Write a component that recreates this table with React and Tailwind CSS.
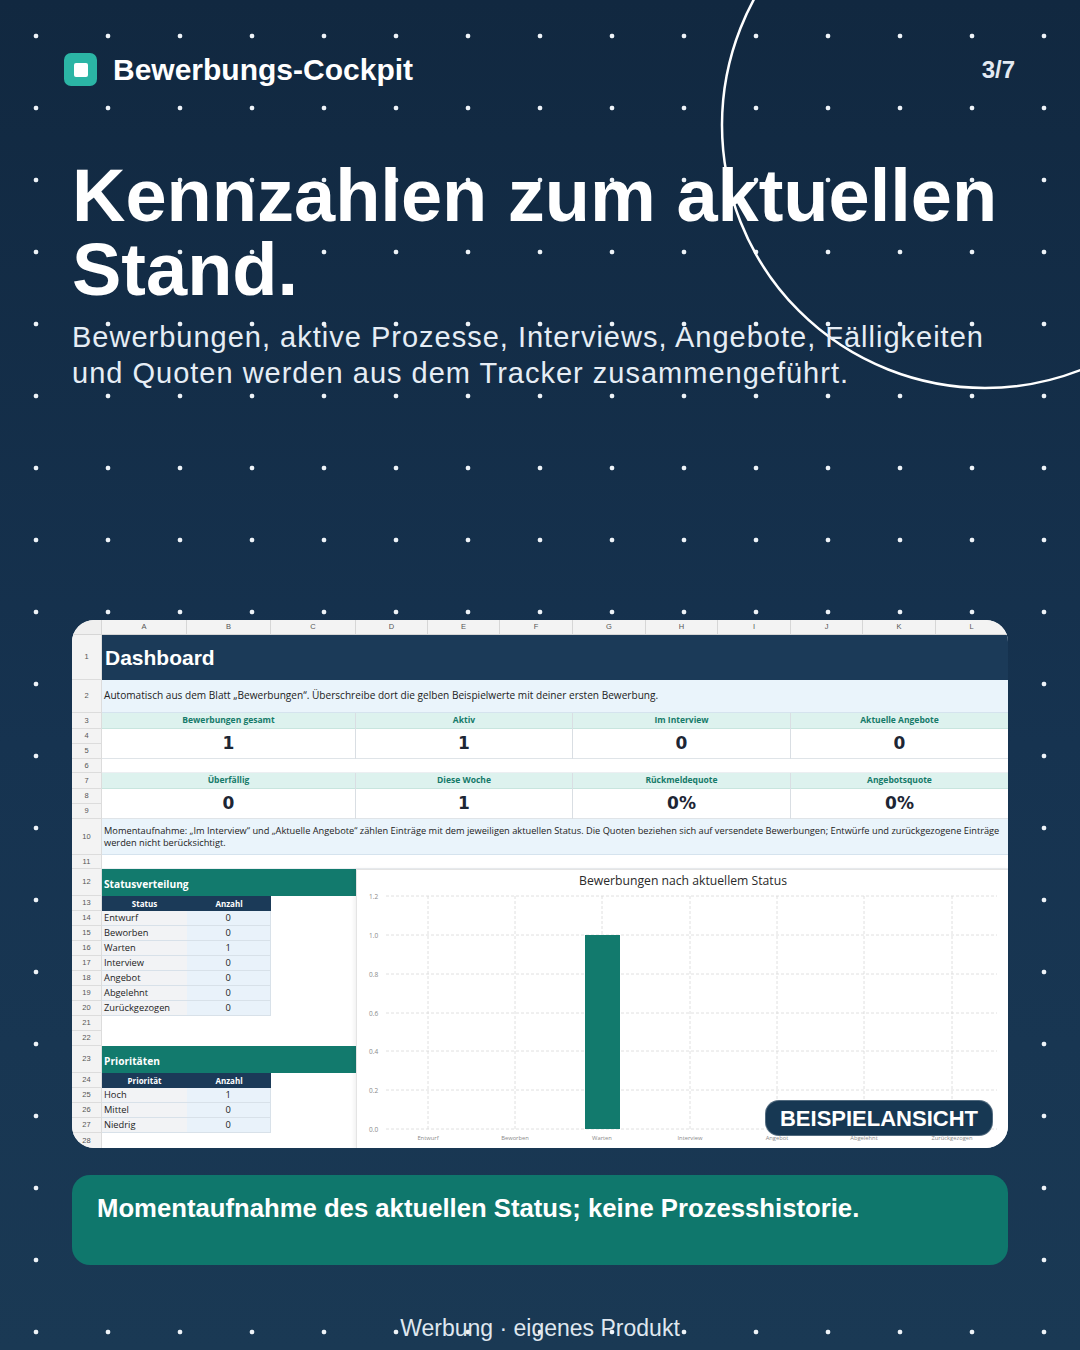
import React from "react";

const COLS = [
  { l: "A", w: "w-[85px]" },
  { l: "B", w: "w-[84px]" },
  { l: "C", w: "w-[85px]" },
  { l: "D", w: "w-[72px]" },
  { l: "E", w: "w-[72px]" },
  { l: "F", w: "w-[73px]" },
  { l: "G", w: "w-[73px]" },
  { l: "H", w: "w-[72px]" },
  { l: "I", w: "w-[73px]" },
  { l: "J", w: "w-[72px]" },
  { l: "K", w: "w-[73px]" },
  { l: "L", w: "w-[72px]" },
];

function RowNum({ n, cls }) {
  return (
    <div
      className={`${cls} w-[30px] shrink-0 flex items-center justify-center bg-[#f3f3f3] border-b border-r border-[#dcdcdc] text-[7.5px] text-[#555] font-['Liberation_Sans',Arial,sans-serif]`}
    >
      {n}
    </div>
  );
}

function KpiGroup({ rows, items }) {
  return (
    <div className="flex">
      <div className="flex flex-col w-[30px] shrink-0">
        <RowNum n={rows[0]} cls="h-[16px]" />
        <RowNum n={rows[1]} cls="h-[15px]" />
        <RowNum n={rows[2]} cls="h-[15px]" />
      </div>
      <div className="flex flex-1">
        {items.map((it) => (
          <div key={it.label} className={`${it.w} flex flex-col border-r border-[#d9dee3] last:border-r-0`}>
            <div className="h-[16px] bg-[#ddf2ee] border-b border-[#c8e5de] flex items-center justify-center text-[8.5px] font-bold text-[#157a69] font-['Open_Sans',sans-serif]">
              {it.label}
            </div>
            <div className="h-[30px] bg-white border-b border-[#dfe4e8] flex items-center justify-center text-[17px] font-bold text-[#1d2634] font-['DejaVu_Sans',sans-serif]">
              {it.value}
            </div>
          </div>
        ))}
      </div>
    </div>
  );
}

function EmptyRow({ n, cls }) {
  return (
    <div className="flex">
      <RowNum n={n} cls={cls} />
      <div className={`${cls} flex-1 bg-white border-b border-[#eceff2]`} />
    </div>
  );
}

function SectionHead({ n, title }) {
  return (
    <div className="flex">
      <RowNum n={n} cls="h-[27px]" />
      <div className="h-[27px] w-[254px] bg-[#127a6d] flex items-end pb-[4px] pl-[2px] text-white font-bold text-[10.2px] font-['Open_Sans',sans-serif]">
        {title}
      </div>
    </div>
  );
}

function TableHead({ n, a, b }) {
  return (
    <div className="flex">
      <RowNum n={n} cls="h-[15px]" />
      <div className="h-[15px] w-[169px] flex bg-[#1b3a58] text-white font-bold text-[8px] font-['Open_Sans',sans-serif]">
        <div className="w-[85px] flex items-center justify-center">{a}</div>
        <div className="w-[84px] flex items-center justify-center">{b}</div>
      </div>
      <div className="h-[15px] w-[85px] bg-white" />
    </div>
  );
}

function TableRow({ n, label, value }) {
  return (
    <div className="flex">
      <RowNum n={n} cls="h-[15px]" />
      <div className="h-[15px] w-[169px] flex border-b border-r border-[#d8e1e9] text-[9.3px] text-[#222] font-['Open_Sans',sans-serif]">
        <div className="w-[85px] bg-[#f2f3f5] flex items-center pl-[2px]">{label}</div>
        <div className="w-[84px] bg-[#e9f2fa] flex items-center justify-center">{value}</div>
      </div>
      <div className="h-[15px] w-[85px] bg-white" />
    </div>
  );
}

function Chart() {
  const ticks = [
    { v: "1.2", y: 26 },
    { v: "1.0", y: 65 },
    { v: "0.8", y: 104 },
    { v: "0.6", y: 143 },
    { v: "0.4", y: 181 },
    { v: "0.2", y: 220 },
    { v: "0.0", y: 259 },
  ];
  const cats = [
    { l: "Entwurf", x: 71 },
    { l: "Beworben", x: 158 },
    { l: "Warten", x: 245 },
    { l: "Interview", x: 333 },
    { l: "Angebot", x: 420 },
    { l: "Abgelehnt", x: 507 },
    { l: "Zurückgezogen", x: 595 },
  ];
  return (
    <svg width="652" height="278" viewBox="0 0 652 278" className="block">
      <text x="326" y="15" textAnchor="middle" fontSize="12.2" fill="#2a2a2a" fontFamily="Open Sans, sans-serif">
        Bewerbungen nach aktuellem Status
      </text>
      {ticks.map((t) => (
        <g key={t.v}>
          <line x1="29" x2="640" y1={t.y} y2={t.y} stroke="#d8d8d8" strokeWidth="0.8" strokeDasharray="3 2" />
          <text x="12" y={t.y + 2.5} fontSize="6.5" fill="#8a8a8a" fontFamily="Open Sans, sans-serif">
            {t.v}
          </text>
        </g>
      ))}
      {cats.map((c) => (
        <g key={c.l}>
          <line x1={c.x} x2={c.x} y1="26" y2="259" stroke="#d8d8d8" strokeWidth="0.8" strokeDasharray="3 2" />
          <text x={c.x} y="270" textAnchor="middle" fontSize="5.8" fill="#8a8a8a" fontFamily="Open Sans, sans-serif">
            {c.l}
          </text>
        </g>
      ))}
      <rect x="228" y="65" width="35" height="194" fill="#127a6d" />
    </svg>
  );
}

function Sheet() {
  return (
    <div className="relative mt-[229px] h-[528px] rounded-[22px] overflow-hidden bg-white">
      {/* column headers */}
      <div className="flex h-[15px]">
        <div className="w-[30px] h-[15px] bg-[#efefef] border-r border-b border-[#d6d6d6]" />
        {COLS.map((c) => (
          <div
            key={c.l}
            className={`${c.w} h-[15px] bg-[#f3f3f3] border-r border-b border-[#d6d6d6] flex items-center justify-center text-[7.5px] text-[#555] font-['Liberation_Sans',Arial,sans-serif]`}
          >
            {c.l}
          </div>
        ))}
      </div>

      {/* row 1 */}
      <div className="flex">
        <RowNum n="1" cls="h-[45px]" />
        <div className="h-[45px] flex-1 bg-[#1b3a58] flex items-center pl-[3px] text-white font-bold text-[21px] font-['Liberation_Sans',Arial,sans-serif]">
          Dashboard
        </div>
      </div>

      {/* row 2 */}
      <div className="flex">
        <RowNum n="2" cls="h-[33px]" />
        <div className="h-[33px] flex-1 bg-[#eaf4fb] border-b border-[#d5e3ee] flex items-center pl-[2px] text-[10.1px] text-[#222] whitespace-nowrap font-['Open_Sans',sans-serif]">
          Automatisch aus dem Blatt „Bewerbungen“. Überschreibe dort die gelben Beispielwerte mit deiner ersten Bewerbung.
        </div>
      </div>

      <KpiGroup
        rows={["3", "4", "5"]}
        items={[
          { label: "Bewerbungen gesamt", value: "1", w: "w-[254px]" },
          { label: "Aktiv", value: "1", w: "w-[217px]" },
          { label: "Im Interview", value: "0", w: "w-[218px]" },
          { label: "Aktuelle Angebote", value: "0", w: "w-[217px]" },
        ]}
      />
      <EmptyRow n="6" cls="h-[14px]" />
      <KpiGroup
        rows={["7", "8", "9"]}
        items={[
          { label: "Überfällig", value: "0", w: "w-[254px]" },
          { label: "Diese Woche", value: "1", w: "w-[217px]" },
          { label: "Rückmeldequote", value: "0%", w: "w-[218px]" },
          { label: "Angebotsquote", value: "0%", w: "w-[217px]" },
        ]}
      />

      {/* row 10 */}
      <div className="flex">
        <RowNum n="10" cls="h-[36px]" />
        <div className="h-[36px] flex-1 bg-[#eaf4fb] border-b border-[#d5e3ee] flex items-center pl-[2px] text-[9.25px] leading-[12px] text-[#222] whitespace-nowrap font-['Open_Sans',sans-serif]">
          <div>
            Momentaufnahme: „Im Interview“ und „Aktuelle Angebote“ zählen Einträge mit dem jeweiligen aktuellen Status. Die Quoten beziehen sich auf versendete Bewerbungen; Entwürfe und zurückgezogene Einträge
            <br />
            werden nicht berücksichtigt.
          </div>
        </div>
      </div>
      <EmptyRow n="11" cls="h-[14px]" />

      {/* lower section */}
      <div className="flex">
        <div className="flex flex-col w-[284px] shrink-0">
          <SectionHead n="12" title="Statusverteilung" />
          <TableHead n="13" a="Status" b="Anzahl" />
          <TableRow n="14" label="Entwurf" value="0" />
          <TableRow n="15" label="Beworben" value="0" />
          <TableRow n="16" label="Warten" value="1" />
          <TableRow n="17" label="Interview" value="0" />
          <TableRow n="18" label="Angebot" value="0" />
          <TableRow n="19" label="Abgelehnt" value="0" />
          <TableRow n="20" label="Zurückgezogen" value="0" />
          <div className="flex">
            <RowNum n="21" cls="h-[15px]" />
            <div className="h-[15px] flex-1 bg-white" />
          </div>
          <div className="flex">
            <RowNum n="22" cls="h-[15px]" />
            <div className="h-[15px] flex-1 bg-white" />
          </div>
          <SectionHead n="23" title="Prioritäten" />
          <TableHead n="24" a="Priorität" b="Anzahl" />
          <TableRow n="25" label="Hoch" value="1" />
          <TableRow n="26" label="Mittel" value="0" />
          <TableRow n="27" label="Niedrig" value="0" />
          <div className="flex">
            <RowNum n="28" cls="h-[16px]" />
            <div className="h-[16px] flex-1 bg-white" />
          </div>
        </div>
        <div className="flex-1 h-[280px] bg-white border-l border-t border-[#e4e4e4] shadow-[-2px_0_4px_rgba(0,0,0,0.06)]">
          <Chart />
        </div>
      </div>

      <div className="absolute right-[15px] bottom-[12px] w-[228px] h-[36px] rounded-[14px] bg-[#173853] border border-white/25 flex items-center justify-center text-white font-bold text-[22px] font-['Liberation_Sans',Arial,sans-serif]">
        BEISPIELANSICHT
      </div>
    </div>
  );
}

export default function App() {
  return (
    <div className="relative w-[1080px] h-[1350px] overflow-hidden bg-[linear-gradient(180deg,#112840_0%,#163350_55%,#1a3954_100%)] font-['Liberation_Sans',Arial,sans-serif]">
      <div className="absolute inset-0 bg-[radial-gradient(circle_at_center,#eef3f8_2px,transparent_2.7px)] bg-[length:72px_72px]" />
      <svg className="absolute left-0 top-0" width="1080" height="1350" viewBox="0 0 1080 1350">
        <circle cx="985" cy="125" r="263" fill="none" stroke="#ffffff" strokeWidth="2.5" />
      </svg>

      <div className="relative flex flex-col">
        {/* header */}
        <div className="flex items-center justify-between pl-[64px] pr-[65px] pt-[53px]">
          <div className="flex items-center gap-[16px]">
            <div className="w-[33px] h-[33px] rounded-[7px] bg-[#2bb5a5] flex items-center justify-center">
              <div className="w-[14px] h-[14px] rounded-[2px] bg-white" />
            </div>
            <div className="text-white font-bold text-[30px] leading-[33px]">Bewerbungs-Cockpit</div>
          </div>
          <div className="text-[#e3eaf2] font-bold text-[24px] leading-[33px]">3/7</div>
        </div>

        <div className="px-[72px] flex flex-col">
          <h1 className="mt-[73px] text-white font-bold text-[74px] leading-[74px]">
            Kennzahlen zum aktuellen
            <br />
            Stand.
          </h1>
          <p className="mt-[12px] text-[#e6edf5] text-[29px] leading-[36px] tracking-[1px]">
            Bewerbungen, aktive Prozesse, Interviews, Angebote, Fälligkeiten
            <br />
            und Quoten werden aus dem Tracker zusammengeführt.
          </p>

          <Sheet />

          <div className="mt-[27px] h-[90px] rounded-[18px] bg-[#0f776c] pl-[25px] pt-[18px] text-white font-bold text-[25.7px] leading-[30px]">
            Momentaufnahme des aktuellen Status; keine Prozesshistorie.
          </div>

          <div className="mt-[49px] text-center text-[#dfe7ef] text-[23px] leading-[28px]">
            Werbung · eigenes Produkt
          </div>
        </div>
      </div>
    </div>
  );
}
